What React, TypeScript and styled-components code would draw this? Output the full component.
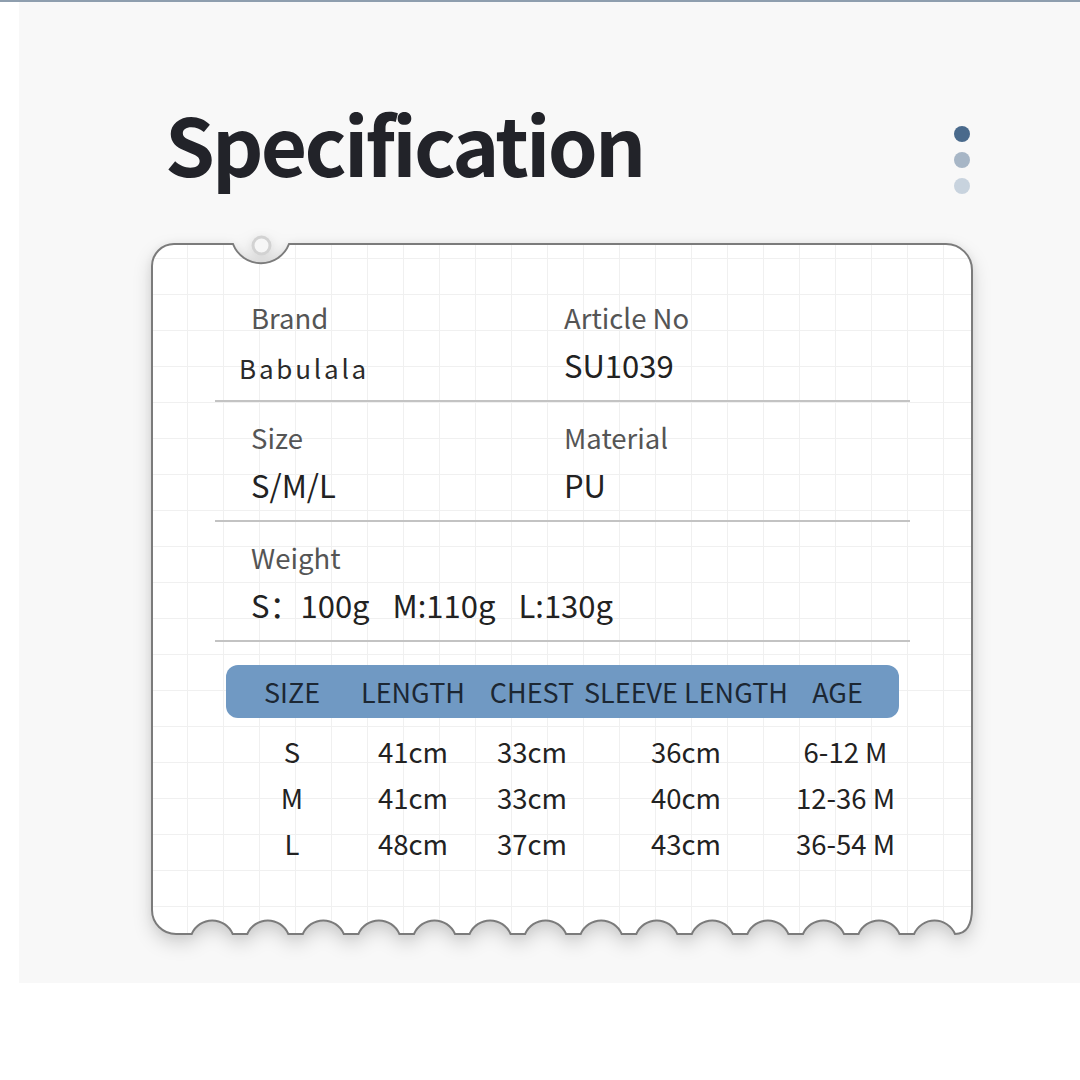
import React from "react";
import styled, { createGlobalStyle } from "styled-components";

const Global = createGlobalStyle`
  html, body { margin: 0; padding: 0; background: #ffffff; }
  body { font-family: "Noto Sans CJK SC", "Noto Sans", sans-serif; }
  * { box-sizing: border-box; }
`;

const Page = styled.div`
  width: 1080px;
  height: 1080px;
  border-top: 2px solid #8e9eae;
  padding-left: 19px;
  background: #ffffff;
  overflow: hidden;
`;

const Panel = styled.main`
  height: 981px;
  background: #f8f8f8;
  padding-top: 100px;
  display: flex;
  flex-direction: column;
`;

const HeaderRow = styled.header`
  display: flex;
  justify-content: space-between;
  align-items: flex-start;
  height: 80px;
  padding-left: 146px;
  padding-right: 110px;
`;

const Title = styled.h1`
  margin: 0;
  font-size: 80px;
  line-height: 80px;
  font-weight: 700;
  letter-spacing: -2.8px;
  color: #222329;
`;

const Dots = styled.div`
  display: flex;
  flex-direction: column;
  gap: 10px;
  margin-top: 24px;
`;

const Dot = styled.span<{ $c: string }>`
  width: 16px;
  height: 16px;
  border-radius: 50%;
  background: ${(p) => p.$c};
`;

const Card = styled.section`
  position: relative;
  width: 822px;
  height: 693px;
  margin: 61px 0 0 132px;
`;

const CardShape = styled.svg`
  position: absolute;
  left: 0;
  top: 0;
  overflow: visible;
  filter: drop-shadow(0 8px 9px rgba(0, 0, 0, 0.16)) drop-shadow(0 0 5px rgba(0, 0, 0, 0.05));
`;

const CardBody = styled.div`
  position: relative;
  padding-top: 39px;
  display: flex;
  flex-direction: column;
`;

const InfoRow = styled.div`
  margin-left: 64px;
  width: 695px;
  height: 120px;
  border-bottom: 2px solid #c3c3c3;
  display: grid;
  grid-template-columns: 349px 1fr;
  padding-top: 17px;
`;

const Field = styled.div<{ $first?: boolean; $wide?: boolean }>`
  display: flex;
  flex-direction: column;
  gap: 10px;
  padding-left: ${(p) => (p.$first ? "36px" : "0")};
  grid-column: ${(p) => (p.$wide ? "1 / -1" : "auto")};
`;

const Label = styled.div`
  font-size: 27.5px;
  line-height: 36px;
  color: #555555;
`;

const Value = styled.div<{ $brand?: boolean }>`
  font-size: ${(p) => (p.$brand ? "26px" : "31px")};
  line-height: 40px;
  color: ${(p) => (p.$brand ? "#2a2a2a" : "#222222")};
  letter-spacing: ${(p) => (p.$brand ? "2.8px" : "0")};
  margin-left: ${(p) => (p.$brand ? "-12px" : "0")};
  padding-top: ${(p) => (p.$brand ? "3px" : "0")};
  white-space: nowrap;
  display: flex;
  gap: 23px;
`;

const Table = styled.div`
  margin: 23px 0 0 75px;
  width: 673px;
  display: flex;
  flex-direction: column;
`;

const cols = "132px 110px 128px 180px 123px";

const HeadBar = styled.div`
  display: grid;
  grid-template-columns: ${cols};
  align-items: center;
  height: 53px;
  border-radius: 12px;
  background: #7099c3;
  margin-bottom: 10px;
`;

const HeadCell = styled.div`
  display: flex;
  justify-content: center;
  font-size: 27px;
  line-height: 53px;
  color: #1c2733;
  white-space: nowrap;
`;

const DataRow = styled.div`
  display: grid;
  grid-template-columns: ${cols};
`;

const DataCell = styled.div<{ $shift?: number }>`
  display: flex;
  justify-content: center;
  font-size: 27.5px;
  line-height: 46px;
  color: #222222;
  white-space: nowrap;
  padding-left: ${(p) => p.$shift ?? 0}px;
`;

function buildPath() {
  const base = 691;
  const start = 40.7;
  const period = 55.57;
  const w = 41;
  let d = "M 1 23 A 22 22 0 0 1 23 1 L 82 1 A 30 30 0 0 0 138 1 L 795 1 A 26 26 0 0 1 821 27 L 821 665 Q 821 691 804 691";
  for (let k = 13; k >= 0; k--) {
    const s = start + period * k;
    const e = s + w;
    if (k !== 13) d += ` L ${e.toFixed(1)} ${base}`;
    d += ` A 22.3 22.3 0 0 0 ${s.toFixed(1)} ${base}`;
  }
  d += ` L 25 ${base} A 24 24 0 0 1 1 667 Z`;
  return d;
}

const cardPath = buildPath();

const headers = ["SIZE", "LENGTH", "CHEST", "SLEEVE LENGTH", "AGE"];
const rows = [
  ["S", "41cm", "33cm", "36cm", "6-12 M"],
  ["M", "41cm", "33cm", "40cm", "12-36 M"],
  ["L", "48cm", "37cm", "43cm", "36-54 M"],
];

export default function App() {
  return (
    <>
      <Global />
      <Page>
        <Panel>
          <HeaderRow>
            <Title>Specification</Title>
            <Dots>
              <Dot $c="#4a6a8c" />
              <Dot $c="#a7b6c6" />
              <Dot $c="#c8d3de" />
            </Dots>
          </HeaderRow>
          <Card>
            <CardShape width="822" height="693" viewBox="0 0 822 693">
              <defs>
                <pattern id="gridp" x="0" y="15" width="36" height="36" patternUnits="userSpaceOnUse">
                  <path d="M 0.5 0 V 36 M 0 0.5 H 36" stroke="#f0f0f0" strokeWidth="1" fill="none" />
                </pattern>
              </defs>
              <path d={cardPath} fill="#ffffff" />
              <path d={cardPath} fill="url(#gridp)" stroke="#7b7b7b" strokeWidth="2" />
              <circle cx="110.5" cy="2.5" r="8.5" fill="#f6f6f6" stroke="#d2d2d2" strokeWidth="3" />
            </CardShape>
            <CardBody>
              <InfoRow>
                <Field $first>
                  <Label>Brand</Label>
                  <Value $brand>Babulala</Value>
                </Field>
                <Field>
                  <Label>Article No</Label>
                  <Value>SU1039</Value>
                </Field>
              </InfoRow>
              <InfoRow>
                <Field $first>
                  <Label>Size</Label>
                  <Value>S/M/L</Value>
                </Field>
                <Field>
                  <Label>Material</Label>
                  <Value>PU</Value>
                </Field>
              </InfoRow>
              <InfoRow>
                <Field $first $wide>
                  <Label>Weight</Label>
                  <Value>
                    <span>S：100g</span>
                    <span>M:110g</span>
                    <span>L:130g</span>
                  </Value>
                </Field>
              </InfoRow>
              <Table>
                <HeadBar>
                  {headers.map((h) => (
                    <HeadCell key={h}>{h}</HeadCell>
                  ))}
                </HeadBar>
                {rows.map((r) => (
                  <DataRow key={r[0]}>
                    {r.map((c, i) => (
                      <DataCell key={i} $shift={i === 4 ? 16 : 0}>
                        {c}
                      </DataCell>
                    ))}
                  </DataRow>
                ))}
              </Table>
            </CardBody>
          </Card>
        </Panel>
      </Page>
    </>
  );
}
